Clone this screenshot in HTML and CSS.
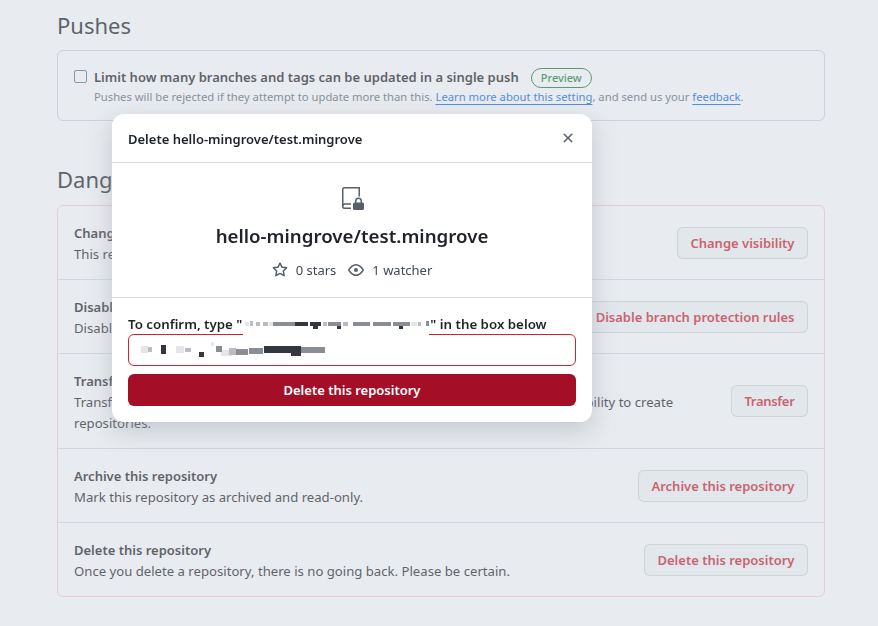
FILE: index.html
```html
<!DOCTYPE html>
<html lang="en">
<head>
<meta charset="utf-8">
<title>Settings</title>
<link rel="stylesheet" href="styles.css">
</head>
<body>
<main class="page">
  <h2 class="heading">Pushes</h2>
  <section class="box push-box">
    <input class="check" type="checkbox">
    <div>
      <div class="push-title"><strong>Limit how many branches and tags can be updated in a single push</strong><span class="badge">Preview</span></div>
      <p class="note">Pushes will be rejected if they attempt to update more than this. <a href="#">Learn more about this setting</a>, and send us your <a href="#">feedback</a>.</p>
    </div>
  </section>
  <h2 class="heading danger-heading">Danger Zone</h2>
  <section class="box danger-box">
    <div class="row"><div class="row-text"><strong>Change repository visibility</strong><p>This repository is currently public.</p></div><button class="btn">Change visibility</button></div>
    <div class="row"><div class="row-text"><strong>Disable branch protection rules</strong><p>Disable branch protection rules enforcement and APIs</p></div><button class="btn">Disable branch protection rules</button></div>
    <div class="row"><div class="row-text"><strong>Transfer ownership</strong><p>Transfer this repository to another user or to an organization where you have the ability to create repositories.</p></div><button class="btn btn-tight">Transfer</button></div>
    <div class="row"><div class="row-text"><strong>Archive this repository</strong><p>Mark this repository as archived and read-only.</p></div><button class="btn">Archive this repository</button></div>
    <div class="row"><div class="row-text"><strong>Delete this repository</strong><p>Once you delete a repository, there is no going back. Please be certain.</p></div><button class="btn">Delete this repository</button></div>
  </section>
</main>
<div class="overlay"></div>
<div class="modal">
  <header class="modal-head">
    <span class="modal-title">Delete hello-mingrove/test.mingrove</span>
    <svg class="close" viewBox="0 0 16 16" width="16" height="16"><path d="M3.72 3.72a.75.75 0 0 1 1.06 0L8 6.94l3.22-3.22a.749.749 0 0 1 1.275.326.749.749 0 0 1-.215.734L9.06 8l3.22 3.22a.749.749 0 0 1-.326 1.275.749.749 0 0 1-.734-.215L8 9.06l-3.22 3.22a.751.751 0 0 1-1.042-.018.751.751 0 0 1-.018-1.042L6.94 8 3.72 4.78a.75.75 0 0 1 0-1.06Z"/></svg>
  </header>
  <div class="summary">
    <svg class="repo-icon" viewBox="0 0 24 24" width="24" height="24">
      <path class="line" d="M11 22.25H4.5A1.75 1.75 0 0 1 2.75 20.5V3.5A1.75 1.75 0 0 1 4.5 1.75H19.25V10.5"/>
      <path class="line" d="M2.75 20.5A2 2 0 0 1 4.75 18H11"/>
      <path class="line" d="M15.75 17.5V15a2.75 2.75 0 0 1 5.5 0v2.5"/>
      <rect class="fill" x="13" y="16.5" width="11" height="7.5" rx="1.5"/>
    </svg>
    <div class="repo-name">hello-mingrove/test.mingrove</div>
    <div class="stats">
      <span class="stat"><svg viewBox="0 0 16 16" width="16" height="16"><path d="M8 .25a.75.75 0 0 1 .673.418l1.882 3.815 4.21.612a.75.75 0 0 1 .416 1.279l-3.046 2.97.719 4.192a.751.751 0 0 1-1.088.791L8 12.347l-3.766 1.98a.75.75 0 0 1-1.088-.79l.72-4.194L.818 6.374a.75.75 0 0 1 .416-1.28l4.21-.611L7.327.668A.75.75 0 0 1 8 .25Zm0 2.445L6.615 5.5a.75.75 0 0 1-.564.41l-3.097.45 2.24 2.184a.75.75 0 0 1 .216.664l-.528 3.084 2.769-1.456a.75.75 0 0 1 .698 0l2.77 1.456-.53-3.084a.75.75 0 0 1 .216-.664l2.24-2.183-3.096-.45a.75.75 0 0 1-.564-.41L8 2.694Z"/></svg>0 stars</span>
      <span class="stat"><svg viewBox="0 0 16 16" width="16" height="16"><path d="M8 2c1.981 0 3.671.992 4.933 2.078 1.27 1.091 2.187 2.345 2.637 3.023a1.62 1.62 0 0 1 0 1.798c-.45.678-1.367 1.932-2.637 3.023C11.67 13.008 9.981 14 8 14c-1.981 0-3.671-.992-4.933-2.078C1.797 10.83.88 9.576.43 8.898a1.62 1.62 0 0 1 0-1.798c.45-.677 1.367-1.931 2.637-3.022C4.33 2.992 6.019 2 8 2ZM1.679 7.932a.12.12 0 0 0 0 .136c.411.622 1.241 1.75 2.366 2.717C5.176 11.758 6.527 12.5 8 12.5c1.473 0 2.825-.742 3.955-1.715 1.124-.967 1.954-2.096 2.366-2.717a.12.12 0 0 0 0-.136c-.412-.621-1.242-1.75-2.366-2.717C10.824 4.242 9.473 3.5 8 3.5c-1.473 0-2.825.742-3.955 1.715-1.124.967-1.954 2.096-2.366 2.717ZM8 10a2 2 0 1 1-.001-3.999A2 2 0 0 1 8 10Z"/></svg>1 watcher</span>
    </div>
  </div>
  <form class="confirm">
    <div class="confirm-label">To confirm, type "<span class="redact"><svg class="mosaic" viewBox="0 0 186 20" width="186" height="20">
      <rect class="wash" width="186" height="20"/>
      <g class="tone-a"><rect x="2" y="6" width="4" height="4"/><rect x="26" y="6" width="4" height="4"/><rect x="168" y="6" width="6" height="4"/></g>
      <g class="tone-b"><rect x="7" y="5" width="3" height="5"/><rect x="13" y="6" width="4" height="4"/><rect x="20" y="6" width="5" height="4"/><rect x="100" y="6" width="5" height="4"/><rect x="175" y="6" width="3" height="4"/><rect x="80" y="6" width="4" height="4"/></g>
      <g class="tone-c"><rect x="30" y="6" width="22" height="4"/><rect x="85" y="6" width="13" height="4"/><rect x="110" y="6" width="17" height="4"/><rect x="130" y="6" width="18" height="4"/><rect x="150" y="6" width="17" height="4"/><rect x="183" y="5" width="3" height="5"/></g>
      <g class="tone-d"><rect x="52" y="6" width="13" height="4"/><rect x="67" y="6" width="11" height="4"/><rect x="70" y="10" width="5" height="3"/><rect x="94" y="10" width="4" height="3"/><rect x="156" y="10" width="4" height="3"/></g>
    </svg></span>" in the box below</div>
    <div class="field"><svg class="mosaic-in" viewBox="0 0 184 16" width="184" height="16">
      <g class="tone-a"><rect x="0" y="4" width="7" height="7"/><rect x="35" y="4" width="8" height="7"/><rect x="80" y="8" width="11" height="6"/><rect x="70" y="0" width="3" height="4"/></g>
      <g class="tone-b"><rect x="7" y="5" width="4" height="5"/><rect x="44" y="6" width="6" height="4"/><rect x="88" y="6" width="7" height="7"/></g>
      <g class="tone-c"><rect x="75" y="4" width="6" height="6"/><rect x="95" y="7" width="12" height="6"/><rect x="160" y="5" width="24" height="6"/><rect x="108" y="6" width="14" height="6"/></g>
      <g class="tone-d"><rect x="20" y="3" width="5" height="9"/><rect x="58" y="10" width="5" height="5"/><rect x="123" y="4" width="27" height="7"/><rect x="150" y="4" width="10" height="10"/></g>
    </svg></div>
    <button class="danger-btn" type="button">Delete this repository</button>
  </form>
</div>
</body>
</html>
```
FILE: styles.css
```css
* { box-sizing: border-box; }
html, body { margin: 0; height: 100%; overflow: hidden; background: #fff; }
body { font-family: "Noto Sans", "Liberation Sans", sans-serif; font-size: 13.15px; color: #1f2328; }
.page { width: 768px; margin-left: 57px; }
.heading { margin: 0; font-size: 22px; font-weight: 400; line-height: 36px; height: 50px; padding-top: 7px; color: #1f2328; }
.danger-heading { margin-top: 40px; height: 44px; padding-top: 0; }
.box { border: 1px solid #d0d7de; border-radius: 6px; }
.push-box { height: 71px; display: flex; gap: 7px; padding: 16px 16px 14px; }
.check { width: 13px; height: 13px; margin: 3px 0 0; appearance: none; border: 1px solid #6e7781; border-radius: 2px; background: #fff; }
.push-title { display: flex; align-items: center; line-height: 21px; font-size: 13px; }
.push-title strong { font-weight: 600; }
.badge { margin-left: 12px; height: 20px; line-height: 18px; padding: 0 9px; border: 1px solid #1a7f37; border-radius: 10px; color: #1a7f37; font-size: 11px; font-weight: 500; }
.note { margin: 0; font-size: 11.26px; line-height: 18px; color: #656d76; }
.note a { color: #0969da; text-decoration: underline; text-underline-offset: 3px; }
.danger-box { border-color: rgba(255, 129, 130, .4); }
.row { display: flex; align-items: center; gap: 16px; padding: 17px 16px 14px; border-top: 1px solid #d8dee4; }
.row:first-child { border-top: 0; }
.row-text { flex: 1; line-height: 21px; }
.row-text strong { font-weight: 600; font-size: 13px; }
.row-text p { margin: 0; }
.btn { flex: none; height: 32px; margin-top: -3px; padding: 0 12.5px; font: 600 13px "Noto Sans", sans-serif; color: #cf222e; background: #f6f8fa; border: 1px solid rgba(31, 35, 40, .15); border-radius: 6px; }
.btn-tight { letter-spacing: -.3px; }
.overlay { position: fixed; inset: 0; background: rgba(195, 203, 213, .38); }
.modal { position: absolute; left: 112px; top: 114px; width: 480px; height: 308px; display: flex; flex-direction: column; background: #fff; border-radius: 12px; box-shadow: 0 8px 24px rgba(140, 149, 159, .4); font-size: 13px; }
.modal-head { height: 49px; display: flex; align-items: center; justify-content: space-between; padding: 2px 16px 0; border-bottom: 1px solid #cfdae1; }
.modal-title { font-weight: 600; }
.close { fill: #57606a; margin-top: -2px; }
.summary { height: 135px; display: flex; flex-direction: column; align-items: center; padding-top: 23px; border-bottom: 1px solid #cfdae1; }
.repo-icon { display: block; }
.line { fill: none; stroke: #57606a; stroke-width: 1.5; }
.fill { fill: #57606a; }
.repo-name { margin-top: 11px; font-size: 18.7px; font-weight: 600; line-height: 30px; }
.stats { margin-top: 9px; display: flex; gap: 12px; line-height: 20px; color: #424a53; }
.stat { display: flex; align-items: center; gap: 8px; }
.stat svg { fill: #57606a; }
.confirm { padding: 16px; display: flex; flex-direction: column; }
.confirm-label { height: 20px; font-size: 13.3px; font-weight: 600; line-height: 20px; white-space: nowrap; }
.redact { display: inline-block; width: 188px; height: 1px; position: relative; }
.mosaic { position: absolute; left: 1px; top: -12px; z-index: 2; }
.wash { fill: #fff; }
.tone-a { fill: #e4e5e7; filter: blur(.4px); }
.tone-b { fill: #b9bcc0; filter: blur(.4px); }
.tone-c { fill: #8a8e94; filter: blur(.4px); }
.tone-d { fill: #34373d; filter: blur(.4px); }
.field { height: 32px; display: flex; align-items: center; padding-left: 12px; border: 1px solid #cf222e; border-radius: 6px; }
.danger-btn { margin-top: 8px; height: 32px; font: 600 13px "Noto Sans", sans-serif; color: #fff; background: #a40e26; border: 0; border-radius: 6px; }
```
